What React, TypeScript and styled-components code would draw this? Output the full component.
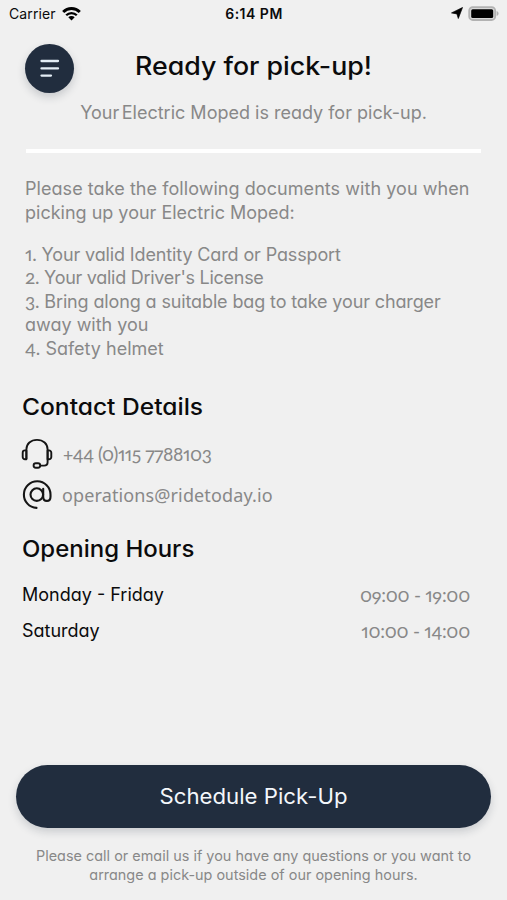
import React from 'react';
import styled, { createGlobalStyle } from 'styled-components';

const GlobalStyle = createGlobalStyle`
  * { box-sizing: border-box; }
  body { margin: 0; background: #f0f0f0; }
`;

const Screen = styled.main`
  width: 507px;
  height: 900px;
  display: flex;
  flex-direction: column;
  overflow: hidden;
  background: #f0f0f0;
  color: #0b0b0c;
  font-family: Inter, sans-serif;
  font-feature-settings: 'cv11';
`;

const StatusBar = styled.div`
  height: 28px;
  padding: 0 8px 0 9px;
  display: grid;
  grid-template-columns: 1fr auto 1fr;
  align-items: center;
  font-size: 14px;
  line-height: 28px;
  font-feature-settings: normal;
`;

const StatusGroup = styled.div<{ $end?: boolean }>`
  display: flex;
  align-items: center;
  gap: ${(p) => (p.$end ? 5 : 6)}px;
  justify-content: ${(p) => (p.$end ? 'flex-end' : 'flex-start')};
  letter-spacing: 0.1px;
  svg { display: block; margin-top: -2px; }
`;

const Clock = styled.strong`
  font-weight: 600;
  letter-spacing: 0.5px;
`;

const Header = styled.header`
  height: 66px;
  padding: 15px 25px 0;
  display: grid;
  grid-template-columns: 50px 1fr 50px;
`;

const MenuButton = styled.button`
  width: 49px;
  height: 49px;
  margin-top: 1px;
  border: 0;
  border-radius: 50%;
  padding: 0;
  background: #212d3e;
  box-shadow: 0 4px 8px rgba(33, 45, 62, 0.2);
  svg { display: block; }
`;

const Title = styled.h1`
  margin: 5px 0 0;
  text-align: center;
  font-size: 25px;
  font-weight: 500;
  line-height: 36px;
  white-space: nowrap;
  transform: scaleX(1.07);
`;

const Subtitle = styled.p`
  margin: 6px 0 0;
  text-align: center;
  color: #888;
  font-size: 18px;
  line-height: 26px;
  white-space: nowrap;
`;

const TightSpace = styled.span`
  letter-spacing: -2.5px;
`;

const Divider = styled.hr`
  width: 455px;
  height: 4px;
  margin: 23px 0 0 26px;
  border: 0;
  background: #fff;
`;

const Documents = styled.section`
  margin: 24px 0 0 25px;
  color: #888;
  font-size: 18px;
  line-height: 23.6px;
`;

const DocumentList = styled.div`
  margin-top: 18.5px;
`;

const Line = styled.div<{ $spacing?: number }>`
  white-space: nowrap;
  letter-spacing: ${(p) => p.$spacing ?? 0}px;
`;

const Figures = styled.span`
  font-family: Lato, sans-serif;
  font-size: 1.06em;
  font-feature-settings: 'onum', 'pnum';
  line-height: 1;
`;

const SectionTitle = styled.h2<{ $top: number; $stretch: number }>`
  margin: ${(p) => p.$top}px 0 0 22px;
  font-size: 23px;
  font-weight: 500;
  line-height: 32px;
  transform: scaleX(${(p) => p.$stretch});
  transform-origin: left;
`;

const Contacts = styled.section`
  margin: 14px 0 0 21px;
  display: grid;
  gap: 8px;
`;

const Contact = styled.div<{ $gap: number }>`
  height: 33px;
  display: flex;
  align-items: center;
  gap: ${(p) => p.$gap}px;
  color: #888;
`;

const Phone = styled.span`
  font-family: Lato, sans-serif;
  font-size: 19px;
  font-feature-settings: 'onum', 'pnum';
  letter-spacing: -0.42px;
  line-height: 24px;
`;

const Email = styled.span`
  font-family: 'Noto Sans', sans-serif;
  font-size: 18px;
  letter-spacing: 0.12px;
  line-height: 24px;
`;

const Hours = styled.section`
  margin: 11px 37px 0 22px;
`;

const HoursRow = styled.div`
  height: 36px;
  display: flex;
  align-items: center;
  justify-content: space-between;
  font-size: 18px;
`;

const Time = styled.span`
  color: #888;
  font-family: Lato, sans-serif;
  font-size: 19px;
  font-feature-settings: 'onum', 'pnum';
  letter-spacing: -0.27px;
`;

const Footer = styled.footer`
  margin-top: auto;
  padding: 0 16px 16px;
`;

const ScheduleButton = styled.button`
  display: block;
  width: 475px;
  height: 63px;
  border: 0;
  border-radius: 32px;
  padding: 0;
  background: #212d3e;
  color: #f4f7fb;
  font: 400 21px/63px Inter, sans-serif;
  font-feature-settings: 'cv11';
  box-shadow: 0 4px 8px rgba(33, 45, 62, 0.18);
`;

const ButtonLabel = styled.span`
  display: block;
  transform: scaleX(1.057);
`;

const Help = styled.div`
  margin-top: 18px;
  text-align: center;
  color: #888;
  font-size: 14.4px;
  line-height: 19px;
`;

const Wifi = () => (
  <svg width="19" height="15" viewBox="0 0 19 15" fill="none" stroke="#000" strokeWidth="3">
    <path d="M1.2 6a11.7 11.7 0 0 1 16.6 0" />
    <path d="M4.2 9.300a7.500 7.500 0 0 1 10.600 0" strokeWidth="2.300" />
    <path d="M6.3 11.300a4.600 4.600 0 0 1 6.400 0L9.500 14.600z" fill="#000" stroke="none" />
  </svg>
);

const LocationArrow = () => (
  <svg width="12" height="12" viewBox="0 0 12 12">
    <path d="M11.500.5 7.300 11.500 5.900 6.900.5 5.900z" fill="#000" stroke="#000" strokeWidth=".7" strokeLinejoin="round" />
  </svg>
);

const Battery = () => (
  <svg width="31" height="15" viewBox="0 0 31 15">
    <rect x="1.2" y="1.200" width="26" height="12.800" rx="3.600" fill="#d8d8d8" stroke="#b2b2b2" strokeWidth="1.800" />
    <rect x="3.2" y="3.200" width="22" height="8.800" rx="1.500" fill="#000" />
    <path d="M28.600 5v5c1.300-.5 2-1.400 2-2.500s-.7-2-2-2.500z" fill="#b2b2b2" />
  </svg>
);

const MenuIcon = () => (
  <svg width="49" height="49" viewBox="0 0 49 49" stroke="#e3edf5" strokeWidth="2.300" strokeLinecap="round">
    <path d="M16.500 17h16.500M16.500 24.400h16.500M16.500 31.600h9.500" />
  </svg>
);

const Headset = () => (
  <svg width="32" height="32" viewBox="0 0 32 32" fill="none" stroke="#151515" strokeWidth="1.900" strokeLinejoin="round">
    <path d="M5.400 21V11.500C5.400 5.800 9.800 1.900 16 1.900s10.600 3.900 10.600 9.600V21" />
    <path d="M5.400 12.400H4A2.300 2.300 0 0 0 1.700 14.700V19A2.300 2.300 0 0 0 4 21.300h1.400zM26.600 12.400H28A2.300 2.300 0 0 1 30.300 14.700V19A2.300 2.300 0 0 1 28 21.300h-1.400z" />
    <path d="M26.600 21v3.200c0 2-1.400 3.400-3.500 3.400h-4" />
    <rect x="12.600" y="25.300" width="6.600" height="4.500" rx="2.200" />
  </svg>
);

const AtSign = () => (
  <svg width="32" height="32" viewBox="0 0 32 32" fill="none" stroke="#151515" strokeWidth="2.100" strokeLinecap="round">
    <path d="M15.500 28.900A13.300 13.300 0 1 1 29.500 15.500v2.200c0 2.500-1.400 4.200-3.600 4.200s-3.700-1.700-3.700-4.200V9.700" />
    <circle cx="15.800" cy="15.600" r="6.300" />
  </svg>
);

export default function App() {
  return (
    <Screen>
      <GlobalStyle />
      <StatusBar>
        <StatusGroup><span>Carrier</span><Wifi /></StatusGroup>
        <Clock>6:14 PM</Clock>
        <StatusGroup $end><LocationArrow /><Battery /></StatusGroup>
      </StatusBar>
      <Header>
        <MenuButton aria-label="Menu"><MenuIcon /></MenuButton>
        <Title>Ready for pick-up!</Title>
      </Header>
      <Subtitle>Your<TightSpace> </TightSpace>Electric Moped is ready for pick-up.</Subtitle>
      <Divider />
      <Documents>
        <Line $spacing={0.06}>Please take the following documents with you when</Line>
        <Line>picking up your Electric Moped:</Line>
        <DocumentList>
          <Line $spacing={-0.13}><Figures>1.</Figures> Your valid Identity Card or Passport</Line>
          <Line $spacing={-0.28}><Figures>2.</Figures> Your valid Driver's License</Line>
          <Line $spacing={-0.13}><Figures>3.</Figures> Bring along a suitable bag to take your charger</Line>
          <Line>away with you</Line>
          <Line><Figures>4.</Figures> Safety helmet</Line>
        </DocumentList>
      </Documents>
      <SectionTitle $top={30.5} $stretch={1.068}>Contact Details</SectionTitle>
      <Contacts>
        <Contact $gap={10}><Headset /><Phone>+44 (0)115 7788103</Phone></Contact>
        <Contact $gap={9}><AtSign /><Email>operations@ridetoday.io</Email></Contact>
      </Contacts>
      <SectionTitle $top={22} $stretch={1.042}>Opening Hours</SectionTitle>
      <Hours>
        <HoursRow><span>Monday - Friday</span><Time>09:00 - 19:00</Time></HoursRow>
        <HoursRow><span>Saturday</span><Time>10:00 - 14:00</Time></HoursRow>
      </Hours>
      <Footer>
        <ScheduleButton><ButtonLabel>Schedule Pick-Up</ButtonLabel></ScheduleButton>
        <Help>
          <Line $spacing={0.02}>Please call or email us if you have any questions or you want to</Line>
          <Line $spacing={0.02}>arrange a pick-up outside of our opening hours.</Line>
        </Help>
      </Footer>
    </Screen>
  );
}
